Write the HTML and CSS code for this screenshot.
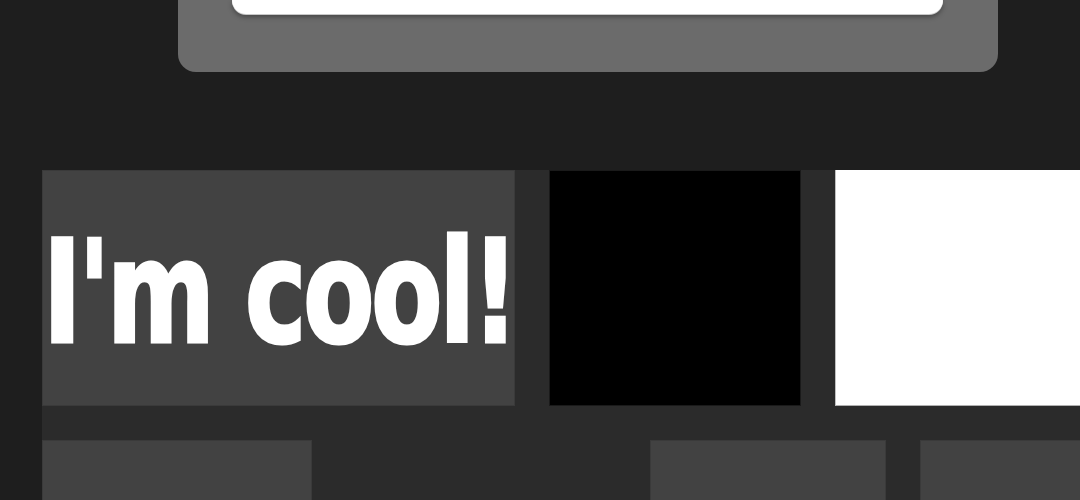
FILE: index.html
```html
<!DOCTYPE html>
<html>
<head>
<meta charset="utf-8">
<link rel="stylesheet" href="styles.css">
</head>
<body>
<div class="page">
  <div class="panel">
    <div class="field"></div>
  </div>
  <div class="board">
    <div class="row row-main">
      <div class="tile tile-grey tile-text"><span class="cool">I'm cool!</span></div>
      <div class="tile tile-black"></div>
      <div class="tile tile-white"></div>
    </div>
    <div class="row row-next">
      <div class="tile tile-grey tile-a"></div>
      <div class="tile tile-empty"></div>
      <div class="tile tile-grey tile-b"></div>
      <div class="tile tile-grey tile-c"></div>
    </div>
  </div>
</div>
</body>
</html>
```

FILE: styles.css
```css
html, body {
  margin: 0;
  padding: 0;
  background: #1e1e1e;
  overflow: hidden;
  width: 1080px;
  height: 500px;
}

.page {
  display: flex;
  flex-direction: column;
}

.panel {
  margin-left: 178px;
  width: 820px;
  height: 72px;
  background: #6b6b6b;
  border-radius: 0 0 18px 18px;
  display: flex;
}

.field {
  margin-left: 54px;
  width: 711px;
  height: 14px;
  background: #ffffff;
  border-radius: 0 0 14px 14px;
  box-shadow: 0 1px 0 #c8c8c8, 0 3px 5px rgba(0, 0, 0, 0.35);
}

.board {
  margin-top: 98px;
  margin-left: 42px;
  width: 1038px;
  height: 330px;
  background: #2b2b2b;
  display: flex;
  flex-direction: column;
  gap: 34px;
  overflow: hidden;
}

.row {
  display: flex;
  gap: 34px;
}

.row-main {
  height: 236px;
}

.row-next {
  height: 60px;
}

.tile {
  box-sizing: border-box;
  flex: none;
}

.tile-grey {
  background: #424242;
  border: 1px solid #3a3a3a;
}

.row-next .tile-grey {
  border-bottom: none;
}

.tile-text {
  width: 473px;
  display: flex;
  align-items: center;
  justify-content: center;
}

.cool {
  display: inline-block;
  font-family: "DejaVu Sans Condensed", "DejaVu Sans", sans-serif;
  font-weight: bold;
  font-size: 115px;
  line-height: 1;
  color: #ffffff;
  white-space: nowrap;
  letter-spacing: -3px;
  -webkit-text-stroke: 2.5px #ffffff;
  transform: translate(1px, 5px) scaleY(1.235);
}

.tile-black {
  width: 252px;
  background: #000000;
  border: 1px solid #1a1a1a;
}

.tile-white {
  width: 245px;
  background: #ffffff;
  border-left: 1px solid #c0c0c0;
  border-bottom: 1px solid #b0b0b0;
}

.tile-a {
  width: 270px;
}

.tile-empty {
  width: 270px;
}

.tile-b {
  width: 236px;
}

.tile-c {
  width: 160px;
  border-right: none;
}
```
